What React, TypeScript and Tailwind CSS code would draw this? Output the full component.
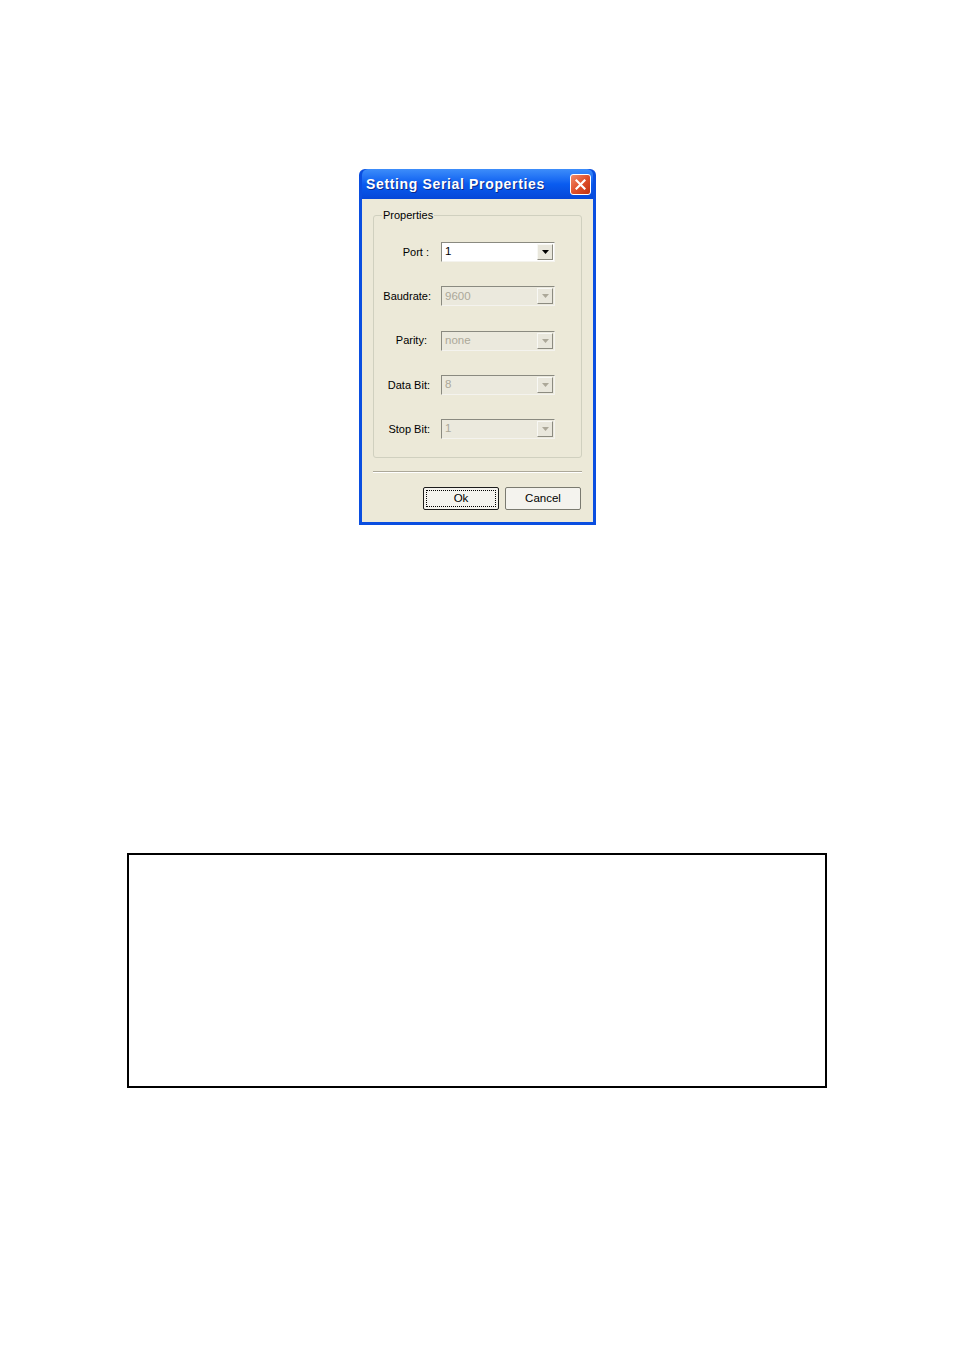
import React from "react";

function Combo({ value, disabled }: { value: string; disabled?: boolean }) {
  return (
    <div
      className={`flex h-[20px] w-[114px] items-stretch border border-t-[#8a8a80] border-l-[#8a8a80] border-r-[#f4f3ee] border-b-[#f4f3ee] ${
        disabled ? "bg-[#ebe9dd]" : "bg-white"
      }`}
    >
      <div
        className={`flex flex-1 items-center pl-[3px] text-[11.5px] leading-none ${
          disabled ? "text-[#aca899]" : "text-black"
        }`}
      >
        {value}
      </div>
      <div
        className={`m-[1px] flex w-[16px] items-center justify-center border border-t-[#f8f8f4] border-l-[#f8f8f4] border-r-[#8c8b80] border-b-[#8c8b80] bg-[#e9e7dc]`}
      >
        <svg width="7" height="4" viewBox="0 0 7 4">
          <polygon points="0,0 7,0 3.5,4" fill={disabled ? "#aca899" : "#000"} />
        </svg>
      </div>
    </div>
  );
}

function Row({ label, value, disabled, pad }: { label: string; value: string; disabled?: boolean; pad: string }) {
  return (
    <div className="flex h-[20px] items-center">
      <div className={`w-[57px] text-right text-[11px] text-black ${pad}`}>{label}</div>
      <div className="ml-[10px]">
        <Combo value={value} disabled={disabled} />
      </div>
    </div>
  );
}

export default function App() {
  return (
    <div
      className="relative h-[1351px] w-[954px] overflow-hidden bg-white"
      style={{ fontFamily: '"Liberation Sans", Arial, sans-serif' }}
    >
      <div className="flex flex-col">
        {/* Dialog */}
        <div className="ml-[359px] mt-[169px] flex h-[356px] w-[237px] flex-col rounded-t-[6px] bg-[#0a4ee0] px-[3px] pb-[3px]">
          <div className="flex h-[30px] items-center justify-between rounded-t-[6px] bg-gradient-to-b from-[#3d8dfa] via-[#0a5cf0] to-[#0647d8] pl-[4px] pr-[2px]">
            <span className="text-[14px] font-bold tracking-[0.65px] text-white [text-shadow:1px_1px_0_#0b2a8a]">
              Setting Serial Properties
            </span>
            <div className="flex h-[21px] w-[21px] items-center justify-center rounded-[3px] border border-white bg-gradient-to-br from-[#f08a6a] via-[#e0502a] to-[#c03010]">
              <svg width="11" height="11" viewBox="0 0 11 11">
                <path d="M1.5 1.5 L9.5 9.5 M9.5 1.5 L1.5 9.5" stroke="#fff" strokeWidth="2.2" strokeLinecap="square" />
              </svg>
            </div>
          </div>
          <div className="flex flex-1 flex-col bg-[#ece9d8] px-[11px] pt-[16px]">
            {/* Group box */}
            <div className="relative flex h-[243px] flex-col rounded-[3px] border border-[#d0d0bf] pt-[26px]">
              <span className="absolute left-[8px] top-[-7px] bg-[#ece9d8] px-[1px] text-[11px] leading-[13px] text-black">
                Properties
              </span>
              <div className="flex flex-col gap-[24.25px]">
                <Row label="Port :" value="1" pad="pr-[2px]" />
                <Row label="Baudrate:" value="9600" disabled pad="pr-0" />
                <Row label="Parity:" value="none" disabled pad="pr-[4px]" />
                <Row label="Data Bit:" value="8" disabled pad="pr-[1px]" />
                <Row label="Stop Bit:" value="1" disabled pad="pr-[1px]" />
              </div>
            </div>
            {/* separator */}
            <div className="mt-[13px] h-[2px] border-t border-b border-t-[#aca899] border-b-white" />
            <div className="mt-[14px] flex justify-end gap-[6px] pr-[1px]">
              <div className="flex h-[23px] w-[76px] items-center justify-center rounded-[2px] border border-[#1c1c1c] bg-[#f4f3ee] p-[2px]">
                <div className="flex h-full w-full items-center justify-center border border-dotted border-black text-[11.5px] text-black">
                  Ok
                </div>
              </div>
              <div className="flex h-[23px] w-[76px] items-center justify-center rounded-[2px] border border-[#7a7a70] bg-[#f4f3ee] text-[11.5px] text-black">
                Cancel
              </div>
            </div>
          </div>
        </div>

        {/* Empty framed box */}
        <div className="ml-[127px] mt-[328px] h-[235px] w-[700px] border-2 border-black" />
      </div>
    </div>
  );
}
